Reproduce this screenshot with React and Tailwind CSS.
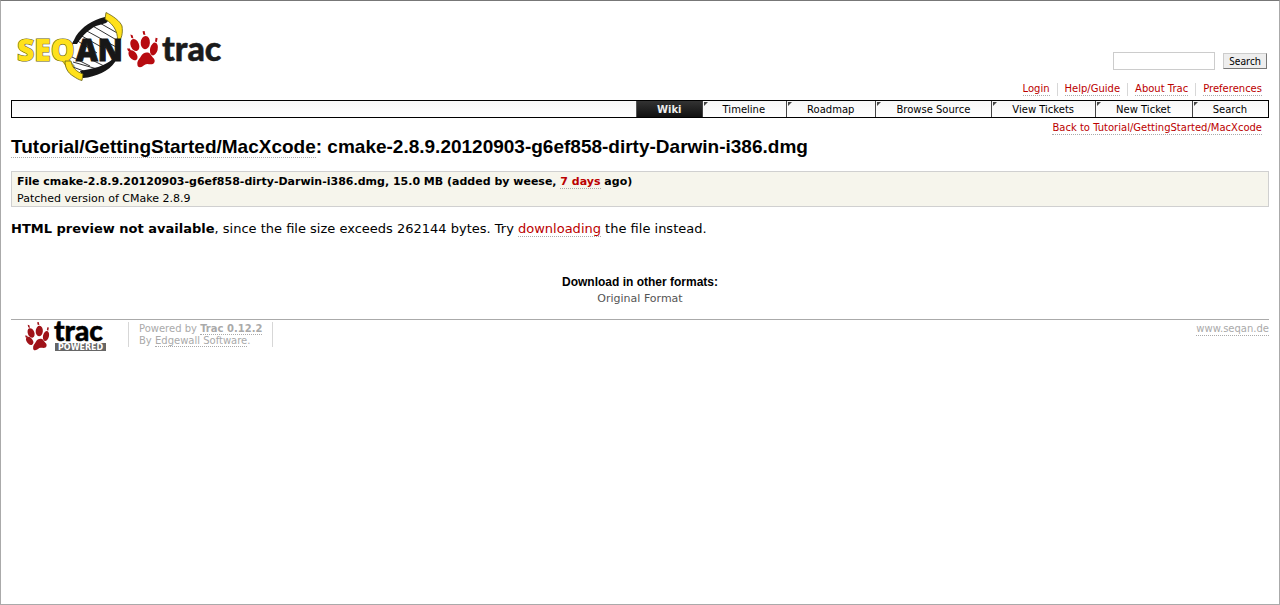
const LINK = "border-b border-dotted border-[#aaa] text-[#b00]";

function Paw({ fill }) {
  return (
    <g fill={fill}>
      <ellipse cx="7.8" cy="14" rx="4.2" ry="6.3" transform="rotate(-22 7.8 14)" />
      <ellipse cx="18.3" cy="11.6" rx="4.6" ry="6.7" transform="rotate(4 18.3 11.6)" />
      <ellipse cx="26.9" cy="18" rx="3.8" ry="6.5" transform="rotate(14 26.9 18)" />
      <ellipse cx="6" cy="24.2" rx="3.7" ry="5.7" transform="rotate(-38 6 24.2)" />
      <path d="M3.4 3.4L5.6 4.2L6.4 7.6L4.2 6.8Z M15.6 .2L17.6 0L18.4 4L16.2 3.6Z M28.6 6.8L30.6 7.2L29.8 11.2L28 10.4Z M0 17.4L2.8 17.6L4.2 20.2L1.2 20.2Z" />
      <path d="M10.4 33.5C10 29.6 12.4 28.4 13.8 25.6C15.4 22.4 18 21.2 20.8 21.6C23.6 22 23.8 24.6 25.8 26.4C27.8 28 28.2 30 27.2 31.8C26 33.8 23 33.2 20.4 33C17.4 32.8 16.4 36 13 36.2C11.2 36.2 10.4 35 10.4 33.5Z" />
    </g>
  );
}

function SiteLogo() {
  return (
    <svg width="208" height="70" viewBox="17 12 208 70" role="img" aria-label="SeqAn Trac">
      <path d="M106 19C91 23 80 30 74 41C69 50 68 58 68 64L82 74C98 73 110 66 115 54C120 44 120 34 115 25Z" fill="#fff" />
      <path d="M98 22L119 34M91 25L120 42M85 30L118 48M80 35L105 49M76 40L97 53M73 62L104 71M72 57L90 66M70 66L92 74M92 60L108 68" stroke="#333" strokeWidth="1" />
      <path d="M74 41C71 47 68 52 67 60" fill="none" stroke="#333" strokeWidth="1" />
      <path d="M105 17C92 20 82 27 76 36L72 44L77 44C82 36 88 30 96 26L106 23L109 20Z" fill="#171717" />
      <path d="M117 54C112 62 101 67 90 69L80 71L83 78C96 77 109 71 115 62Z" fill="#171717" />
      <path d="M106 12.5C113 16 120 21 122 26C123 33 122 39 117 44C119 34 115 25 105 19Z" fill="#ffe11b" stroke="#66600f" strokeWidth=".8" />
      <g fontFamily="'Open Sans', sans-serif" fontWeight="800" fontSize="30">
        <text x="17" y="61" fill="#ffe11b" stroke="#66600f" strokeWidth="1.2" paintOrder="stroke">SEQ</text>
        <text x="76" y="61" fill="#171717" stroke="#171717" strokeWidth="1">AN</text>
      </g>
      <path d="M65 61C65 68 68 73 73 76C76 78 79 80 82 80.5L83 74C77 72 72 68 71 61Z" fill="#ffe11b" stroke="#66600f" strokeWidth=".8" />
      <g transform="translate(127 31)"><Paw fill="#b70b10" /></g>
      <text x="162" y="61" fontFamily="Lato, sans-serif" fontWeight="900" fontSize="34" fill="#1b1b1b" stroke="#1b1b1b" strokeWidth=".5">trac</text>
    </svg>
  );
}

function PoweredLogo() {
  return (
    <svg className="overflow-visible" width="82" height="30" viewBox="0 0 82 30" role="img" aria-label="Trac Powered">
      <g transform="scale(.78)"><Paw fill="#9f1319" /></g>
      <text x="29" y="19" fontFamily="Lato, sans-serif" fontWeight="900" fontSize="28" fill="#000" stroke="#000" strokeWidth=".5">trac</text>
      <rect x="30" y="21" width="51" height="8" fill="#666" />
      <text x="33" y="28" fontFamily="'DejaVu Sans', sans-serif" fontSize="8" fontWeight="700" fill="#fff">POWERED</text>
    </svg>
  );
}

const META = ["Login", "Help/Guide", "About Trac", "Preferences"];
const TABS = ["Timeline", "Roadmap", "Browse Source", "View Tickets", "New Ticket", "Search"];

export default function App() {
  return (
    <div className="min-h-screen border border-[#aaa] border-t-[#777] bg-white px-[10px] font-['DejaVu_Sans',Verdana,sans-serif] text-[13px] text-black">
      <header className="flex justify-between pt-[11px]">
        <a href="#home" className="ml-[6px] h-[70px]"><SiteLogo /></a>
        <div className="flex flex-col items-end pt-10 text-[10px]">
          <form className="mr-[2px] flex items-center gap-2" onSubmit={(e) => e.preventDefault()}>
            <input type="text" aria-label="Search" className="h-[18px] w-[102px] border border-[#ccc] px-1" />
            <button type="submit" className="h-4 border border-[#ccc] border-r-[#777] border-b-[#777] bg-[#eee] px-[5px] font-['Noto_Sans',sans-serif] text-[10px] leading-[14px] text-black">Search</button>
          </form>
          <nav className="mt-[13px] mb-1 flex">
            {META.map((label, i) => (
              <span key={label} className={i < 3 ? "flex border-r border-[#d7d7d7] px-[7px] leading-3" : "flex px-[7px] leading-3"}>
                <a href="#meta" className={LINK}>{label}</a>
              </span>
            ))}
          </nav>
        </div>
      </header>
      <nav className="flex h-[18px] justify-end border border-black bg-linear-to-b from-[#f7f7f7] to-white text-[10px] leading-[18px]">
        <a href="#wiki" className="border-l border-[#555] bg-linear-to-b from-[#333] to-[#111] px-5 font-bold text-[#eee]">Wiki</a>
        {TABS.map((label) => (
          <a key={label} href="#tab" className="relative border-l border-[#444] pr-[21px] pl-5">
            <svg className="absolute top-px left-px" width="4" height="4" aria-hidden="true"><path d="M0 0H4L0 4Z" fill="#444" /></svg>
            {label}
          </a>
        ))}
      </nav>
      <div className="flex justify-end px-[7px] pt-1 text-[10px] leading-3">
        <a href="#back" className={LINK}>Back to Tutorial/GettingStarted/MacXcode</a>
      </div>
      <main>
        <h1 className="flex pt-px text-[19px] leading-[21px] font-bold font-['Liberation_Sans',Arial,sans-serif]">
          <a href="#page" className="border-b border-dotted border-[#aaa]">Tutorial/GettingStarted/MacXcode</a>
          <span>: cmake-2.8.9.20120903-g6ef858-dirty-Darwin-i386.dmg</span>
        </h1>
        <section className="mt-[13px] border border-[#d0d0d0] bg-[#f6f5ec] px-[5px] pt-[2px] text-[11px] leading-4">
          <p className="font-bold">File cmake-2.8.9.20120903-g6ef858-dirty-Darwin-i386.dmg, 15.0 MB (added by weese, <a href="#timeline" className={LINK}>7 days</a> ago)</p>
          <p className="pt-px leading-[15px]">Patched version of CMake 2.8.9</p>
        </section>
        <p className="mt-[13px] leading-[18px]">
          <strong>HTML preview not available</strong>, since the file size exceeds 262144 bytes. Try <a href="#download" className={LINK}>downloading</a> the file instead.
        </p>
        <section className="mt-9 flex flex-col items-center text-[11px] leading-4">
          <h3 className="text-[12px] font-bold font-['Liberation_Sans',Arial,sans-serif]">Download in other formats:</h3>
          <a href="#original" className="mt-px text-[#555]">Original Format</a>
        </section>
      </main>
      <footer className="mt-3 flex items-start border-t border-[#aaa] pt-[2px] text-[10px] leading-3 text-[#aaa]">
        <a href="#trac" className="ml-[14px]"><PoweredLogo /></a>
        <p className="ml-[21px] border-x border-[#d7d7d7] px-[10px] pt-px">
          Powered by <a href="#about" className="border-b border-dotted border-[#aaa] font-bold">Trac 0.12.2</a><br />
          By <a href="#edgewall" className="border-b border-dotted border-[#aaa]">Edgewall Software</a>.
        </p>
        <a href="#seqan" className="ml-auto border-b border-dotted border-[#aaa] pt-px">www.seqan.de</a>
      </footer>
    </div>
  );
}
